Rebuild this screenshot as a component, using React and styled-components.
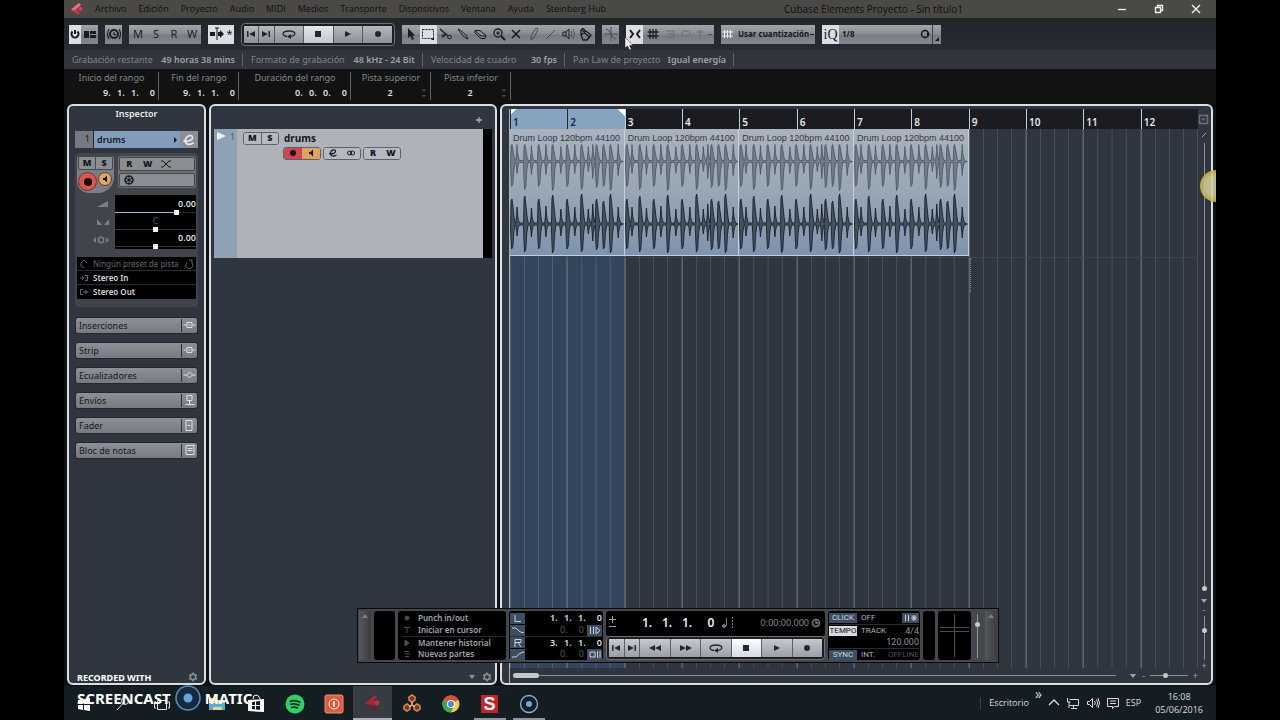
import React from 'react'
import styled, { createGlobalStyle, css } from 'styled-components'

/* ---------- data ---------- */
const menus = ['Archivo', 'Edición', 'Proyecto', 'Audio', 'MIDI', 'Medios', 'Transporte', 'Dispositivos', 'Ventana', 'Ayuda', 'Steinberg Hub']

const info = [
    { label: 'Grabación restante', value: '49 horas 38 mins', width: 179 },
    { label: 'Formato de grabación', value: '48 kHz - 24 Bit', width: 180 },
    { label: 'Velocidad de cuadro', value: '30 fps', width: 142 },
    { label: 'Pan Law de proyecto', value: 'Igual energía', width: 169 },
]

const ranges = [
    { label: 'Inicio del rango', value: ['9.', '1.', '1.', '0'], width: 95 },
    { label: 'Fin del rango', value: ['9.', '1.', '1.', '0'], width: 80 },
    { label: 'Duración del rango', value: ['0.', '0.', '0.', '0'], width: 112 },
    { label: 'Pista superior', single: '2', width: 80 },
    { label: 'Pista inferior', single: '2', width: 80 },
]

// position, level above the axis, level below it
const hits = [
    [2, 25, 25], [7, 17, 12], [15, 28, 28], [21.5, 16, 13], [29, 25, 25], [36, 18, 13], [43, 29, 29],
    [51, 15, 12], [57.5, 25, 25], [65, 17, 12], [72, 30, 28], [78.5, 15, 10], [83, 20, 17], [87, 25, 26],
    [94, 23, 25], [101, 30, 29], [108.5, 17, 14],
]

const wave = (axis, ceiling) => {
    const up = []
    const down = []
    hits.forEach(([x, a, b]) => {
        const top = Math.min(a, ceiling)
        const strong = a > 20
        if (strong) {
            up.push([x - 1.4, 1], [x - 0.9, top * 0.9], [x, top], [x + 1.2, top * 0.6], [x + 2.2, top * 0.25], [x + 3.2, 1])
            down.push([x - 1.6, 1], [x - 1, b * 0.6], [x - 0.4, b], [x + 0.9, b * 0.9], [x + 1.8, b * 0.35], [x + 3, 1])
        } else {
            up.push([x - 1.2, 1], [x - 0.4, top * 0.5], [x, top], [x + 0.7, top * 0.45], [x + 1.6, top * 0.2], [x + 2.6, 1])
            down.push([x - 1.2, 1], [x - 0.4, b * 0.6], [x, b], [x + 0.7, b * 0.5], [x + 1.6, b * 0.2], [x + 2.6, 1])
        }
    })
    const points = [
        ...up.map(([x, v]) => `${x.toFixed(1)},${(axis - v).toFixed(1)}`),
        `113,${axis}`,
        ...down.reverse().map(([x, v]) => `${x.toFixed(1)},${(axis + v).toFixed(1)}`),
    ]
    return `M${points.join('L')}Z`
}

/* ---------- icons ---------- */
const Glyph = ({ w = 16, h = 16, children, ...rest }) => (
    <svg width={w} height={h} viewBox={`0 0 ${w} ${h}`} fill="none" stroke="currentColor" aria-hidden="true" {...rest}>
        {children}
    </svg>
)
const Prev = () => <Glyph w={12} h={12} fill="currentColor" stroke="none"><path d="M2 3h1.500v6H2zM10 3v6L4 6z" /></Glyph>
const Next = () => <Glyph w={12} h={12} fill="currentColor" stroke="none"><path d="M8.500 3H10v6H8.500zM2 3v6l6-3z" /></Glyph>
const Rewind = () => <Glyph w={14} h={12} fill="currentColor" stroke="none"><path d="M7 3v6L1 6zM13 3v6L7 6z" /></Glyph>
const Forward = () => <Glyph w={14} h={12} fill="currentColor" stroke="none"><path d="M1 3v6l6-3zM7 3v6l6-3z" /></Glyph>
const Cycle = () => <Glyph w={16} h={12} strokeWidth="1.300"><path d="M6 8.500C0 7.500 1 3 8 3s8 4.500 1.500 5.500" /><path d="M10 6v5L6 8.500z" fill="currentColor" stroke="none" /></Glyph>
const Stop = () => <Glyph w={12} h={12} fill="currentColor" stroke="none"><path d="M3 3h6v6H3z" /></Glyph>
const Play = () => <Glyph w={12} h={12} fill="currentColor" stroke="none"><path d="M3 3v6l6-3z" /></Glyph>
const Record = () => <Glyph w={12} h={12} fill="currentColor" stroke="none"><circle cx="6" cy="6" r="3" /></Glyph>
const Gear = () => (
    <Glyph w={10} h={10} strokeWidth="1.500">
        <circle cx="5" cy="5" r="2.700" />
        <path d="M5 .5v1.500M5 8v1.500M1.100 2.800l1.300.7M7.600 6.500l1.300.7M8.900 2.800l-1.300.7M2.400 6.500l-1.300.7" />
    </Glyph>
)
const Down = () => <Glyph w={8} h={6} fill="currentColor" stroke="none"><path d="M1 1h6L4 5z" /></Glyph>
const Up = () => <Glyph w={8} h={6} fill="currentColor" stroke="none"><path d="M1 5h6L4 1z" /></Glyph>
const Speaker = () => <Glyph w={12} h={12} fill="currentColor" stroke="none"><path d="M4 5h1.500L8 2.500v7L5.500 7H4z" /></Glyph>
const Edit = () => <Glyph w={10} h={10} strokeWidth="1.200"><path d="M1 5.500C4 6.500 8 5 7.500 3 7 1 3.500 1.500 2.500 4.500 1.700 7.500 4.500 9.500 8.500 7" /></Glyph>
const Clock = () => <Glyph w={10} h={10} strokeWidth="1.500"><circle cx="5" cy="5" r="3.500" /><path d="M5 2.500V5h2.500" /></Glyph>
const Diamond = () => (
    <Glyph w={14} h={14}>
        <path d="M9 1L1 7.500 8 13l2-2-3-3.500L11 3z" fill="#c9354a" stroke="none" />
        <path d="M9 1L1 7.500l3 1L11 3z" fill="#e07584" stroke="none" />
        <circle cx="10.500" cy="7" r="2" fill="#d0405a" stroke="none" />
    </Glyph>
)

const tools = [
    { name: 'Seleccionar', d: <path d="M5 2v10l2.500-2 1.500 4 2-1-1.700-3.500H12z" fill="currentColor" stroke="none" /> },
    { name: 'Rango', on: true, d: <><path d="M2.500 3.500h11v9h-11z" strokeDasharray="2 1" /><path d="M14 11v3h-3z" fill="currentColor" stroke="none" /></> },
    { name: 'Dividir', d: <><path d="M2 3l8 7M6 10l2-3" strokeWidth="1.400" /><circle cx="5" cy="10" r="1.200" /><circle cx="11.500" cy="11" r="1.800" /></> },
    { name: 'Pegar', d: <path d="M3 3l2 1 6 5 2 4-4-2-4-5z" /> },
    { name: 'Borrar', d: <path d="M2 4.500h5l6 5-1 3H8L2 7zM2 4.500L8 10h5" /> },
    { name: 'Zoom', d: <><circle cx="7" cy="7" r="4" strokeWidth="1.300" /><path d="M10 10l4 4" strokeWidth="2" /><path d="M5 7h4M7 5v4" /></> },
    { name: 'Enmudecer', d: <path d="M4 4l8 8M12 4l-8 8" strokeWidth="1.600" /> },
    { name: 'Dibujar', dim: true, d: <path d="M10 2l2 1-4 9-3 2V10zM5 11l2 1" /> },
    { name: 'Línea', dim: true, d: <path d="M3 13l9-9" /> },
    { name: 'Reproducir', d: <><path d="M2 6h3v4H2zM5 6l3-3v10l-3-3" /><path d="M10 5q2 3 0 6M12 3q3 5 0 10" opacity=".5" /></> },
    { name: 'Color', d: <path d="M3 9l5-4 5 4-4 5H5zM3 9V4q2-3 4 1M4 4l8 8" strokeWidth="1.300" /> },
]

const tabs = [
    { name: 'Inserciones', d: <path d="M1 6h3M10 6h3M4.500 3.500h5v5h-5zM6 6h2" /> },
    { name: 'Strip', d: <path d="M1 6h3M10 6h3M4.500 3.500h5v5h-5zM6 6h2" /> },
    { name: 'Ecualizadores', d: <path d="M1 6h3l3-3 3 3h3M4 6l3 3 3-3" /> },
    { name: 'Envíos', d: <path d="M4.500 1.500h5v5h-5zM7 6v4M3 10.500h9" /> },
    { name: 'Fader', d: <path d="M3.500 1.500h6v10h-6zM5 6.500h3" /> },
    { name: 'Bloc de notas', d: <path d="M3.500 1.500h8v9h-8zM5 4.500h5M5 6.500h5" /> },
]

const Transport = ({ wide }) => (
    <TransportKeys $wide={wide}>
        <Key $w={15} aria-label="Anterior"><Prev /></Key>
        <Key $w={15} aria-label="Siguiente"><Next /></Key>
        {wide && <Key $w={30} aria-label="Rebobinar"><Rewind /></Key>}
        {wide && <Key $w={30} aria-label="Avanzar"><Forward /></Key>}
        <Key $w={30} aria-label="Ciclo"><Cycle /></Key>
        <Key $w={30} $on aria-label="Detener"><Stop /></Key>
        <Key $w={30} aria-label="Iniciar"><Play /></Key>
        <Key $w={30} aria-label="Grabar"><Record /></Key>
    </TransportKeys>
)

const Clip = () => (
    <ClipBox>
        <ClipName>Drum Loop 120bpm 44100</ClipName>
        <svg viewBox="0 0 114 113" preserveAspectRatio="none" aria-hidden="true">
            <path d="M0 19.500H114" stroke="#55636f" strokeWidth="1" />
            <path d={wave(19.5, 17)} fill="#6f7c89" stroke="#414d59" strokeWidth=".7" />
            <path d="M0 82H114" stroke="#1a2530" strokeWidth="1" />
            <path d={wave(82, 30)} fill="#44525f" stroke="#0f1820" strokeWidth=".8" />
        </svg>
    </ClipBox>
)

const TopBars = () => (
    <>
        <TitleBar>
            <Diamond />
            <Menu>
                {menus.map(m => <button key={m}>{m}</button>)}
            </Menu>
            <Title>Cubase Elements Proyecto - Sin título1</Title>
            <WindowKeys>
                <button aria-label="Minimizar"><Glyph w={10} h={10}><path d="M1 5.500h8" strokeWidth="1.300" /></Glyph></button>
                <button aria-label="Restaurar"><Glyph w={10} h={10} strokeWidth="1.300"><path d="M1.500 3.500h5v5h-5zM3.500 3V1.500h5v5H7" /></Glyph></button>
                <button aria-label="Cerrar"><Glyph w={10} h={10} strokeWidth="1.400"><path d="M1 1l8 8M9 1L1 9" /></Glyph></button>
            </WindowKeys>
        </TitleBar>
        <Toolbar>
            <Group $w={29}>
                <Tool $w={12} $on aria-label="Activar proyecto"><Glyph w={12} h={12} strokeWidth="2"><path d="M3.500 3.500a3.500 3.500 0 1 0 5 0M6 2v4" /></Glyph></Tool>
                <Tool $w={17} aria-label="Vista"><Glyph w={14} h={12} fill="currentColor" stroke="none"><path d="M1 3h5v7H1zM7 3h6v3H7zM7 7h6v3H7z" /></Glyph></Tool>
            </Group>
            <Group $w={17}>
                <Tool $w={17} aria-label="Compensación"><Glyph strokeWidth="1.200"><circle cx="8" cy="8" r="4" strokeWidth="2" /><path d="M8 6v2.500h2M3 3q-3 5 0 10M13 3q3 5 0 10" /></Glyph></Tool>
            </Group>
            <Group $w={72}>
                {['M', 'S', 'R', 'W'].map(l => <Tool key={l} $w={18}>{l}</Tool>)}
            </Group>
            <Group $w={26}>
                <Tool $w={17} $on aria-label="Desplazamiento"><Glyph fill="currentColor"><path d="M8 2v12M6 2h4" /><path d="M1 6h5v4H1zM9 6h2V4l4 4-4 4v-2H9z" stroke="none" /></Glyph></Tool>
                <Tool $w={9} $on>*</Tool>
            </Group>
            <Transport />
            <Group $w={193}>
                {tools.map(t => <Tool key={t.name} $w={18} $on={t.on} $dim={t.dim} aria-label={t.name}><Glyph>{t.d}</Glyph></Tool>)}
            </Group>
            <Group $w={17}>
                <Tool $w={17} $dim aria-label="Cruce por cero"><Glyph><path d="M1 8h14M8 1v14M3 3q3 0 5 5t5 5" /></Glyph></Tool>
            </Group>
            <Group $w={88}>
                <Tool $w={17} $on aria-label="Ajuste"><Glyph strokeWidth="2"><path d="M3 4l3 4-3 4M13 4l-3 4 3 4" /></Glyph></Tool>
                <Tool $w={20} aria-label="Rejilla"><Glyph w={14} h={14} strokeWidth="1.300"><path d="M4 2v10M7 2v10M10 2v10M1.500 5h11M1.500 9h11" /></Glyph></Tool>
                <Tool $w={14} $faint aria-label="Tipo"><Glyph w={12} h={12}><path d="M2 3h8M4 6h6M2 9h8M10 3v6" /></Glyph></Tool>
                <Tool $w={17} $faint aria-label="Bucle"><Glyph w={12} h={12}><path d="M3 9C0 5 3 3 6 3s6 2 3 5H5" /></Glyph></Tool>
                <Tool $w={12} $faint aria-label="Evento"><Glyph w={10} h={12}><path d="M5 2v9M2 4h6" /></Glyph></Tool>
                <Tool $w={8} $dim aria-label="Más"><Glyph w={6} h={6}><path d="M1 3.500h4" /></Glyph></Tool>
            </Group>
            <SelectGroup $w={94}>
                <Glyph w={14} h={14} color="#eef0f2"><path d="M3.500 3v8M6.500 3v8M9.500 3v8M1 5h11M1 9h11" /></Glyph>
                <select aria-label="Tipo de rejilla"><option>Usar cuantización</option></select>
                <Glyph w={6} h={6}><path d="M1 3.500h4" /></Glyph>
            </SelectGroup>
            <SelectGroup $w={119}>
                <Iq>iQ</Iq>
                <select aria-label="Cuantización"><option>1/8</option></select>
                <Glyph w={12} h={12} strokeWidth="1.500"><circle cx="6" cy="6" r="3.500" /><path d="M8 4l3 2-3 2z" fill="currentColor" stroke="none" /></Glyph>
                <Corner aria-label="Panel de cuantización"><Glyph w={6} h={6}><path d="M5 1v4H1z" fill="currentColor" stroke="none" /></Glyph></Corner>
            </SelectGroup>
        </Toolbar>
        <InfoLine>
            {info.map(i => (
                <InfoCell key={i.label} $w={i.width}><span>{i.label}</span><b>{i.value}</b></InfoCell>
            ))}
        </InfoLine>
        <RangeLine>
            {ranges.map(r => (
                <RangeCell key={r.label} $w={r.width}>
                    <span>{r.label}</span>
                    {r.single
                        ? <Single><b>{r.single}</b><Spin aria-label={r.label}><Glyph w={6} h={10}><path d="M1.500 3L3 1.500 4.500 3M1.500 7L3 8.500 4.500 7" /></Glyph></Spin></Single>
                        : <Position>{r.value.map((v, i) => <b key={i}>{v}</b>)}</Position>}
                </RangeCell>
            ))}
        </RangeLine>
    </>
)

const Inspector = () => (
    <InspectorPanel>
        <h2>Inspector</h2>
        <TrackHead>
            <i>1</i>
            <b>drums</b>
            <Glyph w={6} h={8} fill="currentColor" stroke="none"><path d="M1 1v6l3-3z" /></Glyph>
            <EditKey aria-label="Editar canal"><Edit /></EditKey>
        </TrackHead>
        <Section>
            <Keys>
                <Left>
                    <Plate><PlateKey>M</PlateKey><PlateKey>S</PlateKey></Plate>
                    <Rounds>
                        <Round $size={19} $c="#e0524f" aria-label="Grabar pista"><Glyph w={12} h={12} fill="currentColor" stroke="none"><circle cx="6" cy="6" r="4" /></Glyph></Round>
                        <Round $size={14} $c="#e0a763" aria-label="Monitor"><Speaker /></Round>
                    </Rounds>
                </Left>
                <Right>
                    <Plate $plain><PlateKey>R</PlateKey><PlateKey>W</PlateKey><PlateKey aria-label="Fundidos"><Glyph w={12} h={8}><path d="M1 1h2l6 6h2M1 7h2l6-6h2" /></Glyph></PlateKey><Blank /></Plate>
                    <Plate $plain><PlateKey aria-label="Congelar"><Glyph w={12} h={10} strokeWidth="1.500"><circle cx="6" cy="5" r="4" /><path d="M6 1v8M2.500 3l7 4M9.500 3l-7 4" strokeWidth="1" /></Glyph></PlateKey><Blank /><Blank /><Blank /></Plate>
                </Right>
            </Keys>
            <Levels>
                <LevelIcons>
                    <Glyph w={14} h={10} fill="currentColor" stroke="none"><path d="M1 8h11V2z" /></Glyph>
                    <Glyph w={14} h={10} fill="currentColor" stroke="none"><path d="M1 2v6h5zM13 2v6H8z" /></Glyph>
                    <Glyph w={18} h={10} fill="currentColor"><circle cx="9" cy="5" r="2.700" fill="none" strokeWidth="1.500" /><path d="M4 2v6L1 5zM14 2v6l3-3z" stroke="none" /></Glyph>
                </LevelIcons>
                <LevelBox>
                    <output>0.00</output>
                    <Slide type="range" defaultValue="78" $blue aria-label="Volumen" />
                    <output className="mid">C</output>
                    <Slide type="range" aria-label="Panorama" />
                    <output>0.00</output>
                    <Slide type="range" aria-label="Retardo" />
                </LevelBox>
            </Levels>
            <Routing>
                <RouteKey $dim><Glyph w={10} h={10}><path d="M5 1L2 4v3l3 2M5 1l3 3" /></Glyph><span>Ningún preset de pista</span><Glyph w={10} h={10}><path d="M3 3.500A3.500 3.500 0 1 0 8 4M5 1h3v3" /></Glyph></RouteKey>
                <RouteKey><Glyph w={10} h={10}><path d="M1 5h4M3 3l2 2-2 2M6 2.500h2.500v5H6" /></Glyph><span>Stereo In</span></RouteKey>
                <RouteKey><Glyph w={10} h={10}><path d="M4 2.500H1.500v5H4M4 5h5M7 3v4" /></Glyph><span>Stereo Out</span></RouteKey>
            </Routing>
        </Section>
        <Tabs>
            {tabs.map(t => (
                <Tab key={t.name}><span>{t.name}</span><Glyph w={14} h={13}>{t.d}</Glyph></Tab>
            ))}
        </Tabs>
        <Foot><Gear /></Foot>
    </InspectorPanel>
)

const TrackList = () => (
    <ListPanel>
        <ListHead><button aria-label="Añadir pista"><Glyph w={8} h={8} strokeWidth="1.300"><path d="M4 1v6M1 4h6" /></Glyph></button></ListHead>
        <Track>
            <Strip>
                <Glyph w={11} h={10} fill="#eef2f6" stroke="none"><path d="M1 1v8l9-4z" /></Glyph>
                <span>1</span>
            </Strip>
            <TrackBody>
                <Line>
                    <Pair $first><TrackKey>M</TrackKey><TrackKey>S</TrackKey></Pair>
                    <b>drums</b>
                </Line>
                <Line $indent>
                    <Pair><TrackKey $c="#cf4551" aria-label="Grabar pista"><Record /></TrackKey><TrackKey $c="#dfa45c" aria-label="Monitor"><Speaker /></TrackKey></Pair>
                    <Pair><TrackKey aria-label="Editar"><Edit /></TrackKey><TrackKey aria-label="Estéreo"><Glyph w={10} h={8}><circle cx="3.500" cy="4" r="2" /><circle cx="6.500" cy="4" r="2" /></Glyph></TrackKey></Pair>
                    <Pair><TrackKey>R</TrackKey><TrackKey>W</TrackKey></Pair>
                </Line>
            </TrackBody>
            <Meter />
        </Track>
        <Foot><Down /><Gear /></Foot>
    </ListPanel>
)

const Arrange = () => (
    <ArrangePanel>
        <Timeline>
            <Ruler>
                {Array.from({ length: 12 }, (_, i) => <Bar key={i} $on={i < 2} $first={i === 0}>{i + 1}</Bar>)}
            </Ruler>
            <Lanes>
                {Array.from({ length: 12 }, (_, i) => <Beats key={i} $on={i < 2} $mark={i === 8} />)}
                <Clips><Clip /><Clip /><Clip /><Clip /></Clips>
            </Lanes>
            <ScrollRow>
                <Slide type="range" defaultValue="0" $bar aria-label="Desplazamiento horizontal" />
                <Down /><span>-</span>
                <ZoomSlide type="range" defaultValue="40" $round aria-label="Zoom horizontal" />
                <span>+</span>
            </ScrollRow>
        </Timeline>
        <SideBar>
            <Glyph w={12} h={11} strokeWidth="1.500" color="#6b7178"><path d="M1.500 1.500h8v8h-8z" /><path d="M3 4.500h5L5.500 7z" fill="currentColor" stroke="none" /></Glyph>
            <Glyph w={8} h={14}><path d="M2 10l4-4" /></Glyph>
            <TallSlide type="range" defaultValue="100" $round aria-label="Desplazamiento vertical" />
            <Down /><span>-</span>
            <ShortSlide type="range" defaultValue="30" $round aria-label="Zoom vertical" />
            <span>+</span>
        </SideBar>
    </ArrangePanel>
)

const TransportPanel = () => (
    <Floating>
        <Grip><Up /></Grip>
        <Screen $w={21} />
        <Modes>
            {['Punch in/out', 'Iniciar en cursor', 'Mantener historial', 'Nuevas partes'].map((m, i) => (
                <button key={m}>
                    <Glyph w={10} h={10}>
                        {[<circle key="a" cx="5" cy="5" r="2" fill="currentColor" />, <path key="b" d="M2 2.500h6M5 2v6" />, <path key="c" d="M3 2v6l4-3z" fill="currentColor" />, <path key="d" d="M2 2.500h5M3 5h5M3 7.500h4" />][i]}
                    </Glyph>
                    <span>{m}</span>
                </button>
            ))}
        </Modes>
        <Locators>
            <LocRow><Chip aria-label="Localizador izquierdo"><Glyph w={14} h={9}><path d="M4 1v6.500h6" /></Glyph></Chip><Position><b>1.</b><b>1.</b><b>1.</b><b>0</b></Position></LocRow>
            <LocRow $dim><Chip aria-label="Pre-roll"><Glyph w={14} h={9}><path d="M1 2h3q2 0 3 2t6 3" /></Glyph></Chip><Position><b>0.</b><b>0</b></Position><Chip aria-label="Punch in"><Glyph w={14} h={9}><path d="M2.500 1v7M5.500 1v7M8 1v7l4-3.500z" /></Glyph></Chip></LocRow>
            <LocRow $top><Chip aria-label="Localizador derecho"><Glyph w={14} h={9}><path d="M4 9V1.500h6v3H4M7 4.500L10 9" /></Glyph></Chip><Position><b>3.</b><b>1.</b><b>1.</b><b>0</b></Position></LocRow>
            <LocRow $dim><Chip aria-label="Post-roll"><Glyph w={14} h={9}><path d="M1 7h3q2 0 3-2t6-3" /></Glyph></Chip><Position><b>0.</b><b>0</b></Position><Chip aria-label="Punch out"><Glyph w={14} h={9}><path d="M2 2h5v5H2zM9.500 1v7M12 1v7" /></Glyph></Chip></LocRow>
        </Locators>
        <Main>
            <Times>
                <Nudge>
                    <button aria-label="Sumar"><Glyph w={7} h={8}><path d="M0 4.500h7M3.500 1v7" /></Glyph></button>
                    <button aria-label="Restar"><Glyph w={7} h={8}><path d="M0 3.500h7" /></Glyph></button>
                </Nudge>
                <Big><b>1.</b><b>1.</b><b>1.</b><b>0</b></Big>
                <Glyph w={14} h={14}><circle cx="4" cy="10" r="1.500" fill="currentColor" /><path d="M6.500 10V2" /><path d="M12.500 1v12" strokeDasharray="2 1" /></Glyph>
                <time>0:00:00.000</time>
                <Clock />
            </Times>
            <Transport wide />
        </Main>
        <Sync>
            <SyncRow><Tag>CLICK</Tag><span>OFF</span><Tag className="end" $w={17} aria-label="Claqueta previa"><Glyph w={14} h={8}><path d="M1.500 1v6M4.500 1v6M7 4h6M8 1.500l4 5M12 1.500l-4 5M10 1v6" /></Glyph></Tag></SyncRow>
            <SyncRow $top><Tag $on>TEMPO</Tag><span>TRACK</span><i>4/4</i></SyncRow>
            <SyncRow><i>120.000</i></SyncRow>
            <SyncRow $top><Tag>SYNC</Tag><span>INT.</span><i className="off">OFFLINE</i></SyncRow>
        </Sync>
        <Screen $w={12} />
        <Screen $w={33}><Glyph w={33} h={49} stroke="#4a4c4f"><path d="M16.500 3v43M2 16.500h29M2 20.500h29" /></Glyph></Screen>
        <Output><ShortSlide type="range" defaultValue="20" $round aria-label="Nivel de salida" /></Output>
        <Grip><Up /></Grip>
    </Floating>
)

const TaskBar = () => (
    <Tasks>
        <TaskKey aria-label="Inicio"><Glyph w={14} h={14} fill="#fff" stroke="none"><path d="M1 3l5-1v5H1zM7 2l6-1v6H7zM1 8h5v5l-5-1zM7 8h6v6l-6-1z" /></Glyph></TaskKey>
        <TaskKey aria-label="Buscar"><Glyph w={16}><circle cx="10" cy="5" r="3.500" /><path d="M7.500 8L2 14" /></Glyph></TaskKey>
        <TaskKey aria-label="Vista de tareas"><Glyph w={18}><path d="M4.500 4.500h9v9h-9zM3 6H1.500v6H3M15 6h1.500v6H15" /></Glyph></TaskKey>
        <Space />
        <TaskKey aria-label="Explorador"><Glyph w={18} h={16} stroke="none"><path d="M1 2h7l1 2h8v10H1z" fill="#f2d675" /><path d="M1 7h16v7h-3v-3H5v3H1z" fill="#4db1d9" /></Glyph></TaskKey>
        <TaskKey aria-label="Tienda"><Glyph w={18} h={20} stroke="none"><path d="M1 6l16-1v13L1 17z" fill="#fff" /><path d="M6 5q0-4 3-4t4 4" stroke="#fff" /><path d="M5 8l3-.5V11H5zM9 7.500l4-.5v4H9zM5 12h3v3.500L5 15zM9 12h4v4l-4-.5z" fill="#131d22" /></Glyph></TaskKey>
        <TaskKey aria-label="Spotify"><Glyph w={20} h={20} strokeWidth="1.800" stroke="#10251a"><circle cx="10" cy="10" r="9.500" fill="#2bd267" stroke="none" /><path d="M4.500 7.500q6-2 11 1M5 10.500q5-1.500 9.500 1M6 13.500q4-1 7 .7" /></Glyph></TaskKey>
        <TaskKey aria-label="Grabador"><Glyph w={20} h={20}><rect x="1" y="1" width="18" height="18" rx="2" fill="#dd5a3c" stroke="#f09378" /><circle cx="10" cy="10" r="5" stroke="#fff" /><path d="M10 7v6" stroke="#fff" strokeWidth="1.500" /></Glyph></TaskKey>
        <TaskKey $on aria-label="Cubase"><Glyph w={18} h={18} stroke="none"><path d="M11 1L1 9l7 3 4-3-2-3 3-3z" fill="#a6283f" /><circle cx="13" cy="9" r="2.500" fill="#c22f48" /><path d="M4 11l4 1 2 1 3 1-3 3z" fill="#6b1f2e" /></Glyph></TaskKey>
        <TaskKey aria-label="Reason"><Glyph w={20} h={20} strokeWidth="1.500" stroke="#f0803c"><path d="M7 3l3-2 3 2v3l-3 2-3-2zM2 12l3-2 3 2v3l-3 2-3-2zM12 12l3-2 3 2v3l-3 2-3-2z" fill="#5a4238" /><path d="M10 8v3l-3 2M10 11l3 2" stroke="#e9b9a0" /></Glyph></TaskKey>
        <TaskKey aria-label="Chrome"><Glyph w={18} h={18} stroke="none"><circle cx="9" cy="9" r="8.500" fill="#f4cf3a" /><path d="M9 9L1.600 4.700a8.500 8.500 0 0 1 14.800 0z" fill="#df4a3c" /><path d="M9 9L1.600 4.700A8.500 8.500 0 0 0 9 17.500L12 11z" fill="#3aa757" /><circle cx="9" cy="9" r="4" fill="#fff" /><circle cx="9" cy="9" r="3" fill="#4587f3" /></Glyph></TaskKey>
        <TaskKey $open aria-label="Editor S"><LetterTile>S</LetterTile></TaskKey>
        <TaskKey $open aria-label="Screencast"><Glyph w={20} h={20} stroke="#8fb4cf"><circle cx="10" cy="10" r="8.500" strokeWidth="1.300" /><circle cx="10" cy="10" r="3" fill="#6aa9e0" stroke="none" /></Glyph></TaskKey>
        <Tray>
            <span className="desk">Escritorio</span>
            <sup>»</sup>
            <Glyph w={12} h={12} strokeWidth="1.300"><path d="M1 8l5-5 5 5" /></Glyph>
            <Glyph w={14} h={14}><path d="M3.500 3.500h9v6h-9M7.500 10v3M5 12.500h6M1.500 2v4h3M3 6v6" /></Glyph>
            <Glyph w={14} h={14}><path d="M1.500 5.500h2l3-3v9l-3-3h-2zM8.500 5q1.500 2 0 4M10.500 3.500q2.500 3.500 0 7M12 2q3 5 0 10" /></Glyph>
            <Glyph w={14} h={14}><path d="M1.500 2.500h11v8h-4l-2 2v-2h-5zM4 5h6M4 7.500h6" /></Glyph>
            <span>ESP</span>
            <DateTime><span>16:08</span><span>05/06/2016</span></DateTime>
        </Tray>
    </Tasks>
)

const App = () => {
    return (
        <>
            <GlobalStyle />
            <Stage>
                <TopBars />
                <Workspace>
                    <Inspector />
                    <TrackList />
                    <Arrange />
                </Workspace>
                <TaskBar />
                <TransportPanel />
                <Ball />
                <Watermark>
                    <small>RECORDED WITH</small>
                    <div>
                        <strong>SCREENCAST</strong>
                        <Glyph w={28} h={28} stroke="#5b8fb8"><circle cx="14" cy="14" r="12" fill="#152c40" strokeWidth="1.500" /><circle cx="14" cy="14" r="4.500" fill="#64a6e4" stroke="none" /></Glyph>
                        <strong>MATIC</strong>
                    </div>
                </Watermark>
                <Pointer><Glyph w={10} h={15} fill="#fff" stroke="#222" strokeWidth=".6"><path d="M1 1v11l2.500-2 2 4 1.800-1-1.800-3.500H9z" /></Glyph></Pointer>
            </Stage>
        </>
    )
}

export default App

/* ---------- styles ---------- */
const GlobalStyle = createGlobalStyle`
    * { box-sizing: border-box; }
    body { margin: 0; background: #000; font-family: 'Noto Sans', sans-serif; font-size: 9px; line-height: 12px; color: #15181c; }
    button, select, input { font: inherit; color: inherit; margin: 0; padding: 0; border: 0; background: none; border-radius: 0; }
    button { display: flex; align-items: center; justify-content: center; }
    svg { flex: none; display: block; }
    h2 { margin: 0; }
    i { font-style: normal; }
`
const Stage = styled.div`
    position: relative;
    display: flex;
    flex-direction: column;
    min-height: 100vh;
    margin: 0 64px;
    overflow: hidden;
    background: #101112;
`
const TitleBar = styled.header`
    display: flex;
    align-items: center;
    height: 18px;
    padding: 0 12px 0 6px;
    background: #4b4946;
    color: #0e0e0e;
    font-family: 'Open Sans', sans-serif;
`
const Menu = styled.nav`
    display: flex;
    gap: 12px;
    margin-left: 11px;
`
const Title = styled.span`
    margin-left: 178px;
    font-size: 10px;
    white-space: nowrap;
`
const WindowKeys = styled.div`
    display: flex;
    gap: 27px;
    margin-left: auto;
    margin-right: 3px;
    color: #f2f2f2;
`
const Toolbar = styled.div`
    display: flex;
    align-items: center;
    gap: 7px;
    height: 32px;
    padding: 0 5px;
    background: linear-gradient(#22252b, #282b33);
`
const metal = css`
    background: linear-gradient(#a2a4a9, #898b91 48%, #7a7c83 52%, #85878e);
`
const Group = styled.div`
    display: flex;
    flex: none;
    width: ${p => p.$w}px;
    height: 19px;
    ${metal}
`
const Tool = styled.button`
    flex: 0 1 ${p => p.$w}px;
    min-width: 0;
    font-size: 11px;
    overflow: hidden;
    color: ${p => p.$faint ? '#6c6f75' : p.$dim ? '#4c4f55' : '#1a1c20'};
    ${p => p.$on && css`background: #dcdee2;`}
`
const Key = styled.button`
    flex: ${p => p.$w} 1 0;
    color: #23262b;
    border-right: 1px solid #54575c;
    background: ${p => p.$on ? 'linear-gradient(#e4e6ea, #c4c7cd)' : 'linear-gradient(#b4b7bc, #8d9096)'};
    &:last-child { border-right: 0; }
`
const TransportKeys = styled.div`
    display: flex;
    flex: none;
    width: ${p => p.$wide ? 'auto' : '154px'};
    height: ${p => p.$wide ? 24 : 23}px;
    padding: 2px;
    border: 1px solid #6d7076;
    border-radius: 4px;
    background: #1c1e22;
    ${p => p.$wide && css`${Key} { filter: brightness(1.1); }`}
`
const SelectGroup = styled.div`
    display: flex;
    align-items: center;
    width: ${p => p.$w}px;
    height: 19px;
    ${metal}
    font-size: 8px;
    font-weight: 700;
    select {
        flex: 1;
        min-width: 0;
        appearance: none;
        margin-left: 3px;
        color: #14161a;
    }
`
const Iq = styled.span`
    width: 17px;
    height: 19px;
    background: #dcdee2;
    font: 14px/19px 'Liberation Serif', serif;
    text-align: center;
`
const Corner = styled.button`
    width: 9px;
    height: 19px;
    padding-top: 9px;
    margin-left: 1px;
    border-left: 1px solid #3c3f44;
`
const InfoLine = styled.div`
    display: flex;
    height: 19px;
    align-items: center;
    background: #32353b;
    color: #7d858f;
`
const InfoCell = styled.div`
    display: flex;
    justify-content: space-between;
    width: ${p => p.$w}px;
    padding: 1px 7px 1px 8px;
    border-right: 1px solid #60656c;
    white-space: nowrap;
    b { color: #9aa3ad; font-weight: 600; }
`
const RangeLine = styled.div`
    display: flex;
    height: 34px;
    padding: 3px 0;
    background: #121212;
    color: #85888c;
`
const RangeCell = styled.div`
    display: flex;
    flex-direction: column;
    gap: 3px;
    width: ${p => p.$w}px;
    padding-right: 3px;
    border-right: 1px solid #5e6164;
    text-align: center;
    white-space: nowrap;
    & > span:first-child { padding-left: 4px; }
`
const Position = styled.span`
    display: flex;
    flex: 1;
    justify-content: flex-end;
    text-align: left;
    color: #dfe1e3;
    b { width: 14px; font-weight: 600; }
    b:last-child { width: 10px; text-align: right; }
`
const Single = styled.div`
    display: flex;
    align-items: center;
    justify-content: center;
    color: #dfe1e3;
    padding-left: 8px;
    b { flex: 1; font-weight: 600; }
`
const Spin = styled.button`
    color: #777;
`
const Workspace = styled.main`
    display: flex;
    flex: 1;
    gap: 3px;
    padding: 1px 3px;
`
const Panel = styled.section`
    display: flex;
    flex-direction: column;
    border: 2px solid #dcdfe2;
    border-radius: 6px;
    background: #30363f;
`
const InspectorPanel = styled(Panel)`
    width: 139px;
    padding: 1px 6px 0;
    h2 {
        color: #e8eaec;
        font-size: 9px;
        font-weight: 600;
        line-height: 14px;
        text-align: center;
    }
`
const TrackHead = styled.div`
    display: flex;
    align-items: center;
    height: 17px;
    margin-top: 10px;
    border-radius: 2px;
    background: #829cbb;
    i { width: 19px; height: 17px; padding: 2px 3px; background: #76797f; text-align: right; border-right: 1px solid #222; }
    b { flex: 1; padding-left: 3px; font-weight: 600; }
`
const EditKey = styled.button`
    width: 18px;
    height: 17px;
    margin-left: 1px;
    background: #8b8e94;
    color: #e6e8ea;
    svg { width: 14px; height: 14px; }
`
const Section = styled.div`
    margin-top: 5px;
    padding: 3px 2px 8px;
    border-radius: 4px;
    background: #41454b;
`
const Keys = styled.div`
    display: flex;
    gap: 4px;
    height: 37px;
`
const Left = styled.div`
    width: 37px;
    padding: 0 1px;
    border-radius: 3px 3px 16px 12px;
    background: #7c7e83;
`
const Right = styled.div`
    display: flex;
    flex: 1;
    flex-direction: column;
    gap: 2px;
    height: 32px;
    padding: 1px;
    border-radius: 3px;
    background: #6b6e73;
`
const PlateKey = styled.button`
    flex: 1;
    font-weight: 900;
`
const Plate = styled.div`
    display: flex;
    height: 14px;
    border: 1px solid #44474c;
    border-radius: 2px;
    background: #8b8d92;
    ${p => !p.$plain && css`${PlateKey}:last-child { border-left: 1px solid #44474c; }`}
`
const Blank = styled.span`
    flex: 1;
`
const Rounds = styled.div`
    display: flex;
    gap: 1px;
    margin-top: 2px;
`
const Round = styled.button`
    width: ${p => p.$size}px;
    height: ${p => p.$size}px;
    border: 1px solid #5d3a36;
    border-radius: 50%;
    background: ${p => p.$c};
    color: #120d0b;
    flex: none;
`
const Levels = styled.div`
    display: flex;
    margin-top: 2px;
    height: 54px;
`
const LevelIcons = styled.div`
    display: flex;
    flex: 1;
    flex-direction: column;
    align-items: flex-end;
    gap: 8px;
    padding: 4px 5px 0 0;
    color: #7d8085;
`
const LevelBox = styled.div`
    width: 81px;
    padding-top: 4px;
    background: #000;
    color: #d8dadc;
    font-weight: 600;
    output { display: block; height: 10px; line-height: 10px; text-align: right; }
    .mid { text-align: center; color: #55585c; font-weight: 400; }
`
const thumb = css`
    -webkit-appearance: none;
    width: ${p => p.$bar ? 26 : 5}px;
    height: 5px;
    border-radius: ${p => p.$round || p.$bar ? 3 : 0}px;
    background: ${p => p.$round || p.$bar ? '#c3c8ce' : '#f0f2f4'};
`
const Slide = styled.input`
    -webkit-appearance: none;
    display: block;
    width: 100%;
    height: 7px;
    background: linear-gradient(90deg, ${p => p.$blue ? '#9dbbdc 78%, #26292c 78%' : p.$bar ? '#8d9299, #8d9299' : '#33363a, #33363a'}) center / 100% 1px no-repeat;
    &::-webkit-slider-thumb { ${thumb} }
`
const ZoomSlide = styled(Slide)`
    width: 38px;
    background-image: linear-gradient(#8d9299, #8d9299);
`
const TallSlide = styled(Slide)`
    writing-mode: vertical-lr;
    width: 7px;
    height: auto;
    min-height: 0;
    flex: 1;
    margin-bottom: 5px;
    background: linear-gradient(#8d9299, #8d9299) center / 1px 100% no-repeat;
`
const ShortSlide = styled(TallSlide)`
    flex: none;
    height: 44px;
    margin-bottom: 0;
`
const Routing = styled.div`
    margin-top: 8px;
    background: #000;
`
const RouteKey = styled.button`
    width: 100%;
    height: 14px;
    padding: 0 2px;
    gap: 4px;
    color: #64686d;
    font-size: 8px;
    border-bottom: 1px solid #2a2c2f;
    &:last-child { border-bottom: 0; }
    span { flex: 1; text-align: left; white-space: nowrap; ${p => !p.$dim && 'color: #d5d8da; font-weight: 600;'} }
`
const Tabs = styled.div`
    display: flex;
    flex-direction: column;
    gap: 8px;
    margin-top: 10px;
`
const Tab = styled.button`
    height: 17px;
    border: 1px solid #24282e;
    border-radius: 3px;
    background: linear-gradient(#8d9096, #777a80);
    span { flex: 1; padding-left: 3px; text-align: left; }
    svg { width: 16px; border-left: 1px solid #2b2e33; color: #dfe2e5; }
`
const Foot = styled.div`
    display: flex;
    align-items: center;
    justify-content: flex-end;
    gap: 6px;
    height: 12px;
    margin-top: auto;
    color: #8a9097;
`
const ListPanel = styled(Panel)`
    width: 288px;
    padding: 0 3px;
`
const ListHead = styled.div`
    display: flex;
    justify-content: flex-end;
    align-items: center;
    height: 23px;
    padding: 4px 9px 0 0;
    color: #a9aeb4;
`
const Track = styled.div`
    display: flex;
    height: 129px;
    background: #afb2b9;
`
const Strip = styled.div`
    display: flex;
    gap: 3px;
    width: 23px;
    padding: 2px;
    background: #8fa1b5;
    color: #4b5968;
`
const TrackBody = styled.div`
    flex: 1;
    padding: 2px 6px;
`
const Line = styled.div`
    display: flex;
    align-items: center;
    gap: 2px;
    height: 14px;
    margin-bottom: 1px;
    padding-left: ${p => p.$indent ? 40 : 0}px;
    b { margin-left: 3px; font-size: 10px; font-weight: 700; }
`
const TrackKey = styled.button`
    flex: 1;
    height: 11px;
    background: ${p => p.$c || '#b6b9bf'};
    font-weight: 900;
`
const Pair = styled.div`
    display: flex;
    width: ${p => p.$first ? 36 : 38}px;
    height: 13px;
    overflow: hidden;
    border: 1px solid #5e6167;
    border-radius: 3px;
    ${p => p.$first && css`${TrackKey}:last-child { border-left: 1px solid #5e6167; }`}
`
const Meter = styled.div`
    width: 9px;
    background: #000;
`
const ArrangePanel = styled(Panel)`
    flex: 1;
    flex-direction: row;
    min-width: 0;
    padding: 3px 1px 0 7px;
`
const Timeline = styled.div`
    display: flex;
    flex: 1;
    flex-direction: column;
    border-left: 1px solid #aeb3b8;
`
const Ruler = styled.div`
    display: grid;
    grid-template-columns: repeat(12, 1fr);
    height: 20px;
    background: #1b1c22;
`
const Bar = styled.span`
    padding: 7px 2px 0;
    border-left: 1px solid ${p => p.$on ? '#1c2a3a' : '#c9ccd0'};
    font-size: 10px;
    font-weight: 600;
    color: #e4e6e8;
    ${p => p.$on && css`
        color: #12283f;
        background: ${p.$first ? 'linear-gradient(135deg, #fff 4px, #86a4c2 4px)' : 'linear-gradient(225deg, #fff 5px, #86a4c2 5px)'};
    `}
`
const Lanes = styled.div`
    position: relative;
    display: grid;
    grid-template-columns: repeat(12, 1fr);
    flex: 1;
`
const Beats = styled.span`
    border-left: 1px solid #5c636b;
    background: linear-gradient(90deg, transparent calc(100% - 1px), ${p => p.$on ? '#4d6078' : '#484f58'} 0) 0 0 / 25% 100%, ${p => p.$on ? '#33455d' : '#2f363f'};
    ${p => p.$mark && css`
        &::before {
            content: '';
            display: block;
            height: 34px;
            margin-top: 129px;
            border-left: 1px dotted #5c8fc4;
        }
    `}
`
// clips lie over the beat grid
const Clips = styled.div`
    position: absolute;
    inset: 0 0 auto;
    display: grid;
    grid-template-columns: repeat(6, 1fr);
    height: 129px;
    border-bottom: 1px solid #37474d;
`
const ClipBox = styled.div`
    height: 127px;
    overflow: hidden;
    border-right: 1px solid #c5d0dc;
    border-bottom: 1px solid #bfd0e4;
    background: linear-gradient(#aab3bd, #98a6b5 50%, #7e93ad);
    svg { width: 100%; height: 113px; }
`
const ClipName = styled.div`
    height: 13px;
    padding: 3px 0 0 3px;
    font: 9px/12px 'Liberation Sans', sans-serif;
    color: #303a45;
    white-space: nowrap;
`
const ScrollRow = styled.div`
    display: flex;
    align-items: center;
    gap: 5px;
    height: 15px;
    padding-left: 3px;
    color: #a0a5ab;
    & > svg { margin-left: 8px; }
`
const SideBar = styled.div`
    display: flex;
    flex-direction: column;
    align-items: center;
    width: 12px;
    padding: 5px 0 13px;
    gap: 2px;
    color: #a0a5ab;
    span { line-height: 8px; }
`
const Floating = styled.section`
    position: absolute;
    left: 293px;
    bottom: 57px;
    display: flex;
    gap: 3px;
    width: 642px;
    height: 55px;
    padding: 2px 1px;
    border: 1px solid #08090a;
    background: #44474b;
`
const Grip = styled.div`
    flex: none;
    width: 12px;
    padding: 2px;
    background: linear-gradient(90deg, #55575b, #3a3c40);
    color: #7d8085;
`
const Screen = styled.div`
    flex: none;
    width: ${p => p.$w}px;
    border-radius: 3px;
    background: #000;
`
const Modes = styled.div`
    width: 108px;
    padding: 1px 0 0 4px;
    border-radius: 3px;
    background: #000;
    color: #4b4e52;
    font-size: 8px;
    button { gap: 6px; width: 100%; height: 12px; justify-content: flex-start; }
    span { color: #a3a7ab; font-weight: 600; }
    button:nth-child(3) { border-top: 1px solid #2a2c2f; }
`
const Locators = styled.div`
    width: 94px;
    padding: 1px;
    border-radius: 3px;
    background: #000;
`
const LocRow = styled.div`
    display: flex;
    align-items: center;
    gap: 3px;
    height: 12px;
    border-top: ${p => p.$top ? '1px solid #2a2c2f' : '0'};
    ${p => p.$dim && css`b { color: #55585c; font-weight: 400; }`}
`
const Chip = styled.button`
    width: 15px;
    height: 11px;
    background: #3d4e63;
    color: #cbd3dc;
`
const Main = styled.div`
    display: flex;
    flex-direction: column;
    justify-content: space-between;
    width: 219px;
`
const Times = styled.div`
    display: flex;
    align-items: center;
    height: 25px;
    padding: 0 4px 2px 3px;
    border-radius: 3px;
    background: #000;
    color: #777a7e;
    time { margin-left: auto; margin-right: 2px; color: #85888c; }
`
const Nudge = styled.div`
    color: #9a9da1;
`
const Big = styled.div`
    display: flex;
    margin-left: 26px;
    font-size: 12px;
    line-height: 16px;
    color: #eceef0;
    b { width: 20px; font-weight: 600; }
    b:last-child { width: 18px; text-align: center; }
`
const Sync = styled.div`
    width: 92px;
    padding: 1px;
    border-radius: 3px;
    background: #000;
    font-family: Roboto, sans-serif;
    font-size: 8px;
    color: #b0b4b9;
`
const SyncRow = styled.div`
    display: flex;
    align-items: center;
    gap: 4px;
    height: 12px;
    border-top: ${p => p.$top ? '1px solid #2a2c2f' : '0'};
    i { margin-left: auto; font-size: 9px; color: #8f9296; }
    i.off { font-size: 8px; color: #4f5256; }
    .end { margin-left: auto; }
`
const Tag = styled.button`
    width: ${p => p.$w || 28}px;
    height: 10px;
    background: ${p => p.$on ? '#d8dadd' : '#3d4e63'};
    color: ${p => p.$on ? '#111' : '#ccd4dd'};
`
const Output = styled.div`
    flex: 1;
    padding-top: 3px;
`
const Tasks = styled.footer`
    display: flex;
    align-items: stretch;
    height: 34px;
    background: #131d22;
    color: #dfe3e6;
`
const TaskKey = styled.button`
    width: 39px;
    padding-top: 2px;
    ${p => p.$on && css`background: #363c41; border-bottom: 2px solid #aab0b4;`}
    ${p => p.$open && css`
        background: linear-gradient(#8f979c, #8f979c) center bottom / 32px 2px no-repeat;
    `}
`
const Space = styled.span`
    width: 16px;
`
const LetterTile = styled.span`
    width: 17px;
    height: 18px;
    background: #c3232d;
    color: #fff;
    font: 900 18px/18px 'Liberation Sans', sans-serif;
`
const Tray = styled.div`
    display: flex;
    align-items: center;
    gap: 6px;
    margin-left: auto;
    padding-right: 13px;
    font-family: 'Open Sans', sans-serif;
    color: #d9dde0;
    sup { align-self: flex-start; font-size: 14px; line-height: 16px; }
    .desk { padding-left: 8px; border-left: 1px solid #3a4449; }
`
const DateTime = styled.div`
    display: flex;
    flex-direction: column;
    align-items: center;
    margin-left: 8px;
    line-height: 13px;
`
// overlays of the recorder
const Ball = styled.div`
    position: absolute;
    top: 170px;
    right: -16px;
    width: 32px;
    height: 32px;
    border-radius: 50%;
    background: radial-gradient(circle, #d2cba0 45%, #c7b84c 65%, #a99c3a);
    opacity: .9;
`
const Watermark = styled.div`
    position: absolute;
    left: 13px;
    bottom: 8px;
    color: #fff;
    small { display: block; font-size: 9px; font-weight: 700; line-height: 12px; }
    div { display: flex; align-items: center; gap: 3px; height: 28px; }
    strong { font-size: 15px; line-height: 18px; }
`
const Pointer = styled.div`
    position: absolute;
    top: 36px;
    left: 560px;
`
